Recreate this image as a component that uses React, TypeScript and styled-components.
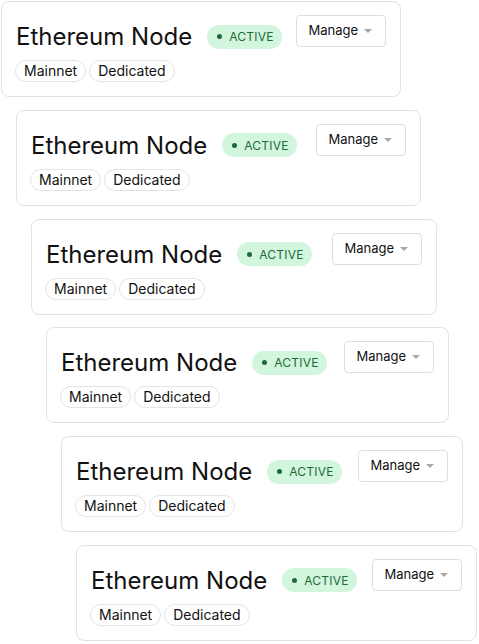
import React from "react"
import styled, { createGlobalStyle } from "styled-components"

const GlobalStyle = createGlobalStyle`
  body {
    margin: 0;
    background: #ffffff;
    font-family: "Inter", "Noto Sans", sans-serif;
    color: #111111;
  }
`

const Stack = styled.div`
  display: flex;
  flex-direction: column;
  gap: 12.8px;
  padding: 1px 0 0 1px;
`

const Card = styled.div<{ $indent: number; $width: number }>`
  box-sizing: border-box;
  width: ${props => props.$width}px;
  margin-left: ${props => props.$indent}px;
  display: flex;
  justify-content: space-between;
  align-items: flex-start;
  padding: 13px 14px 14px 13px;
  border: 1px solid #e2e2e2;
  border-radius: 8px;
  background: #ffffff;
`

const Info = styled.div`
  display: flex;
  flex-direction: column;
`

const TitleRow = styled.div`
  display: flex;
  align-items: center;
  gap: 15px;
  padding-top: 7px;
`

const Title = styled.h2`
  margin: 0 0 0 1px;
  font-size: 24px;
  font-weight: 400;
  line-height: 29px;
  color: #111111;
`

const Badge = styled.span`
  display: inline-flex;
  align-items: center;
  gap: 7px;
  height: 24px;
  padding: 0 8px 0 10px;
  border-radius: 12px;
  background: #d2f5de;
  color: #1d6b36;
  font-size: 12px;
  font-weight: 400;
  letter-spacing: 0.25px;
  &::before {
    content: "";
    width: 5px;
    height: 5px;
    border-radius: 50%;
    background: #1d6b36;
  }
`

const Tags = styled.div`
  display: flex;
  gap: 3px;
  margin-top: 9px;
`

const Tag = styled.span`
  display: inline-block;
  padding: 0 8px;
  border: 1px solid #e4e4e4;
  border-radius: 11px;
  font-size: 14px;
  line-height: 20px;
  color: #111111;
`

const ManageButton = styled.button`
  display: flex;
  align-items: center;
  gap: 6px;
  height: 32px;
  padding: 0 13px 2px 11px;
  border: 1px solid #dedede;
  border-radius: 4px;
  background: #ffffff;
  font-family: inherit;
  font-size: 13px;
  color: #111111;
  cursor: pointer;
`

const Caret = styled.span`
  width: 0;
  height: 0;
  margin-top: 2px;
  border-left: 4px solid transparent;
  border-right: 4px solid transparent;
  border-top: 4px solid #a8a8a8;
`

const widths = [400, 405, 406, 403, 402, 401]

const NodeCard = ({ index, width }: { index: number; width: number }) => (
  <Card $indent={index * 15} $width={width}>
    <Info>
      <TitleRow>
        <Title>Ethereum Node</Title>
        <Badge>ACTIVE</Badge>
      </TitleRow>
      <Tags>
        <Tag>Mainnet</Tag>
        <Tag>Dedicated</Tag>
      </Tags>
    </Info>
    <ManageButton>
      Manage
      <Caret />
    </ManageButton>
  </Card>
)

const App = () => {
  return (
    <>
      <GlobalStyle />
      <Stack>
        {widths.map((w, i) => (
          <NodeCard key={i} index={i} width={w} />
        ))}
      </Stack>
    </>
  )
}

export default App
